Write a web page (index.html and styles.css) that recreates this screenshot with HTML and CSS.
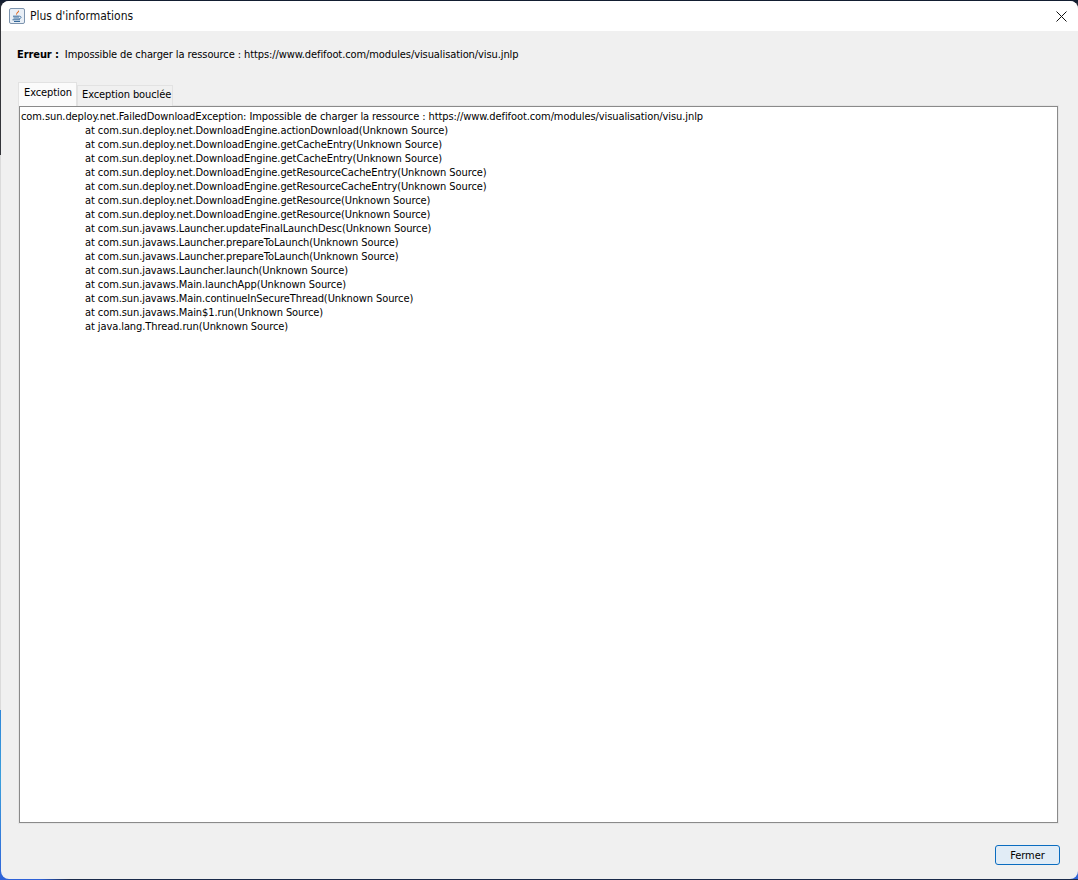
FILE: index.html
```html
<!DOCTYPE html>
<html lang="fr">
<head>
<meta charset="utf-8">
<title>Plus d'informations</title>
<link rel="stylesheet" href="styles.css">
</head>
<body>
<div class="window">
  <header class="titlebar">
    <svg class="app-icon" width="16" height="16" viewBox="0 0 16 16">
      <rect x="0.5" y="0.5" width="15" height="15" rx="1.5" fill="#e9eff6" stroke="#7d94ae"/>
      <path d="M9.300 2c.9 1.500-2.700 2.600-1.900 4.400.2.500.6.900 1 1.200-.9-1.200-.3-2.100.8-3 .9-.7 1.300-1.500.1-2.600z" fill="#e0641a"/>
      <path d="M4 8.200h6.500M4.500 10h5.500M3.500 11.800h7.500M5 13.500h6" stroke="#35689a" stroke-width="1" fill="none"/>
      <path d="M10.500 8.200c2.200 0 2.200 2.300-.4 2.500" stroke="#35689a" stroke-width=".8" fill="none"/>
    </svg>
    <span class="title">Plus d'informations</span>
    <svg class="close" width="11" height="11" viewBox="0 0 11 11"><path d="M.5.5l10 10M10.500.5l-10 10" stroke="#111" stroke-width="1" fill="none"/></svg>
  </header>
  <main class="content">
    <p class="error"><b>Erreur :</b><span>Impossible de charger la ressource : https://www.defifoot.com/modules/visualisation/visu.jnlp</span></p>
    <div class="tabs">
      <div class="tab active">Exception</div>
      <div class="tab inactive">Exception bouclée</div>
    </div>
    <div class="panel">
      <div class="trace">
        <div>com.sun.deploy.net.FailedDownloadException: Impossible de charger la ressource : https://www.defifoot.com/modules/visualisation/visu.jnlp</div>
        <div class="at">at com.sun.deploy.net.DownloadEngine.actionDownload(Unknown Source)</div>
        <div class="at">at com.sun.deploy.net.DownloadEngine.getCacheEntry(Unknown Source)</div>
        <div class="at">at com.sun.deploy.net.DownloadEngine.getCacheEntry(Unknown Source)</div>
        <div class="at">at com.sun.deploy.net.DownloadEngine.getResourceCacheEntry(Unknown Source)</div>
        <div class="at">at com.sun.deploy.net.DownloadEngine.getResourceCacheEntry(Unknown Source)</div>
        <div class="at">at com.sun.deploy.net.DownloadEngine.getResource(Unknown Source)</div>
        <div class="at">at com.sun.deploy.net.DownloadEngine.getResource(Unknown Source)</div>
        <div class="at">at com.sun.javaws.Launcher.updateFinalLaunchDesc(Unknown Source)</div>
        <div class="at">at com.sun.javaws.Launcher.prepareToLaunch(Unknown Source)</div>
        <div class="at">at com.sun.javaws.Launcher.prepareToLaunch(Unknown Source)</div>
        <div class="at">at com.sun.javaws.Launcher.launch(Unknown Source)</div>
        <div class="at">at com.sun.javaws.Main.launchApp(Unknown Source)</div>
        <div class="at">at com.sun.javaws.Main.continueInSecureThread(Unknown Source)</div>
        <div class="at">at com.sun.javaws.Main$1.run(Unknown Source)</div>
        <div class="at">at java.lang.Thread.run(Unknown Source)</div>
      </div>
    </div>
    <footer class="actions"><button class="btn" type="button">Fermer</button></footer>
  </main>
</div>
</body>
</html>
```
FILE: styles.css
```css
* { box-sizing: border-box; }
html, body { margin: 0; height: 100%; }
body {
  width: 1078px;
  height: 880px;
  overflow: hidden;
  padding: 1px 0 1px 1px;
  background-color: #152238;
  background-image:
    linear-gradient(90deg, #2f62d8 0, #2f62d8 40px, #1a2a4a 70px, #1a2a4a 100%),
    linear-gradient(180deg, #111c30 0, #34353a 10px, #34353a 155px, #dadada 155px, #dadada 710px, #2f86d8 710px, #3b9fdc 780px, #2f62d8 880px);
  background-size: 100% 1px, 100% 100%;
  background-position: 0 100%, 0 0;
  background-repeat: no-repeat;
  font-family: "DejaVu Sans Condensed", "DejaVu Sans", sans-serif;
  font-stretch: condensed;
  font-size: 11px;
  letter-spacing: -0.09px;
  color: #000;
}
.window {
  height: 100%;
  display: flex;
  flex-direction: column;
  border-radius: 8px;
  overflow: hidden;
  background: #f0f0f0;
}
.titlebar {
  height: 30px;
  flex: none;
  background: #fff;
  display: flex;
  align-items: center;
  padding: 0 11px 0 8px;
}
.app-icon { flex: none; }
.title { margin-left: 5px; flex: 1; font-size: 12px; letter-spacing: 0; color: #111; }
.close { flex: none; }
.content {
  flex: 1;
  display: flex;
  flex-direction: column;
  padding: 0 18px 14px 17px;
  min-height: 0;
}
.error {
  margin: 15px 0 0 -1px;
  height: 17px;
  line-height: 17px;
  white-space: nowrap;
}
.error b { font-weight: 700; margin-right: 6px; }
.tabs {
  display: flex;
  align-items: flex-end;
  margin-top: 18px;
  height: 25px;
  position: relative;
  z-index: 1;
}
.tab {
  flex: none;
  border: 1px solid #e2e2e2;
  border-bottom: 0;
  white-space: nowrap;
}
.tab.active {
  width: 59px;
  height: 24px;
  line-height: 20px;
  padding-left: 5px;
  background: #fbfbfb;
}
.tab.inactive {
  width: 96px;
  height: 21px;
  line-height: 18px;
  padding-left: 4px;
  background: #f0f0f0;
}
.panel {
  flex: 1;
  min-height: 0;
  margin: 0 2px 0 1px;
  background: #fff;
  border: 1px solid #8a8a8a;
  box-shadow: 0 0 0 1px #e6e6e6;
  padding: 3px 1px 0;
}
.trace { line-height: 14px; white-space: nowrap; }
.at { padding-left: 64px; }
.actions {
  flex: none;
  display: flex;
  justify-content: flex-end;
  padding-top: 22px;
}
.btn {
  width: 65px;
  height: 20px;
  padding: 0;
  font: inherit;
  letter-spacing: inherit;
  color: #000;
  background: #e1ecf6;
  border: 1px solid #0a6cc0;
  border-radius: 3px;
}
```
